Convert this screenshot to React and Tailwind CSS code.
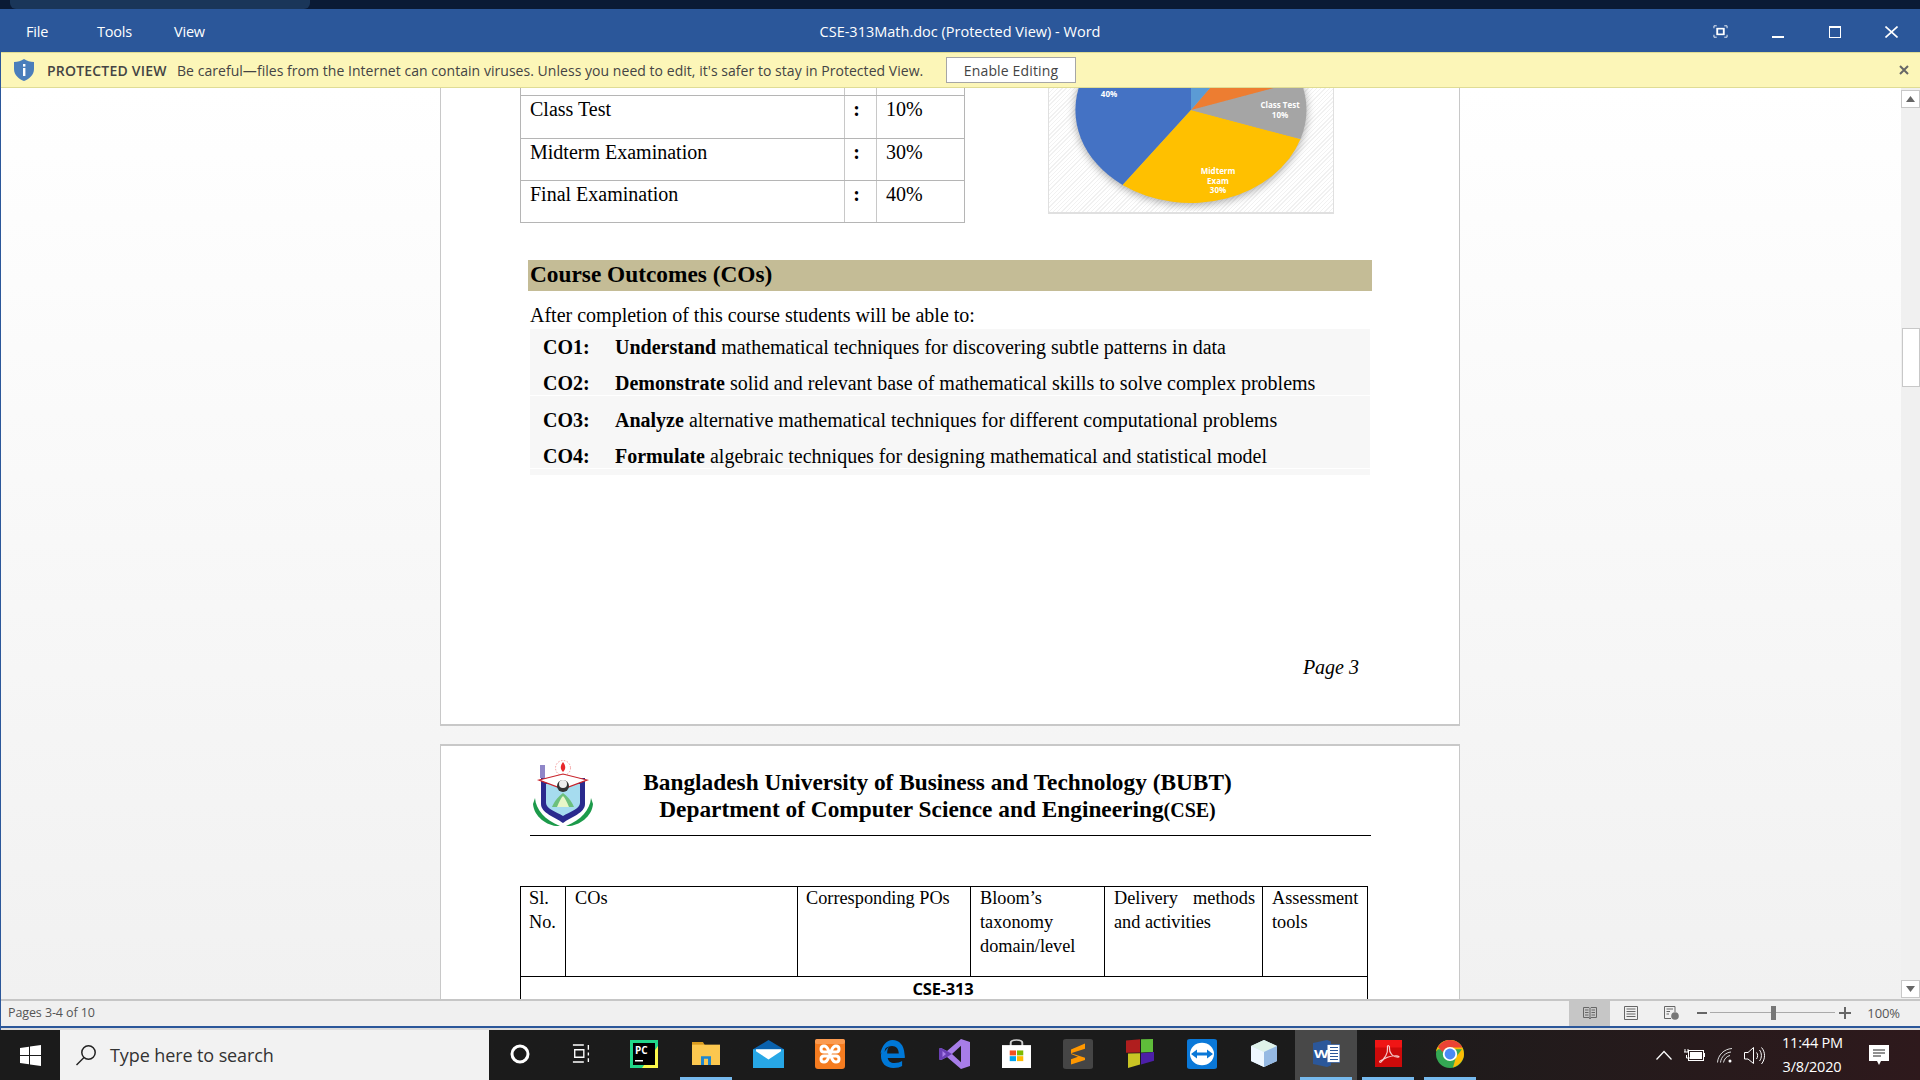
import React from "react";

const Cell = ({ children, active, under }) => (
  <div className={`w-[62px] h-[50px] flex flex-col items-center ${active ? "bg-[#484848]" : ""}`}>
    <div className="flex-1 flex items-center justify-center">{children}</div>
    <div className={`h-[3px] w-[52px] ${under ? "bg-[#76b9ed]" : ""}`} />
  </div>
);

const Ic = ({ children, w = 34, h = 34, vb = "0 0 34 34" }) => (
  <svg width={w} height={h} viewBox={vb} preserveAspectRatio="none">{children}</svg>
);

const Row = ({ code, verb, rest, cls }) => (
  <div className={`h-[36px] flex items-center pl-[13px] pb-[2px] ${cls || ""}`}>
    <b className="w-[72px] shrink-0">{code}</b>
    <span><b>{verb}</b> {rest}</span>
  </div>
);

const Logo = () => (
  <svg width="60" height="68" viewBox="0 0 60 68" className="shrink-0">
    <rect x="7" y="5" width="5" height="13" fill="#8f86c8" />
    <circle cx="30" cy="8" r="7.500" fill="none" stroke="#f39a9a" strokeDasharray="1.500 1.500" />
    <path d="M30 2c3 4 3 7 0 10c-3-3-3-6 0-10z" fill="#e8262a" />
    <path d="M2 38C3 50 12 60 27 66C15 67 1 57 0 44Z" fill="#1c9a4a" />
    <path d="M58 38C57 50 48 60 33 66C45 67 59 57 60 44Z" fill="#1c9a4a" />
    <path d="M8 18L52 18L52 44C52 53 38 57 30 63C22 57 8 53 8 44Z" fill="#2a2a8e" />
    <path d="M13 24L47 24L47 43C47 49 36 52 30 56C24 52 13 49 13 43Z" fill="#a6dcef" />
    <path d="M6 20L30 14L54 20L30 29Z" fill="#fff" stroke="#c8242b" strokeWidth="1.200" />
    <circle cx="30" cy="26" r="6" fill="#333" />
    <circle cx="30" cy="24" r="4" fill="#eee" />
    <path d="M19 47C22 40 26 36 30 33C34 36 38 40 41 47Z" fill="#6cc07c" />
    <path d="M24 47C26 42 28 38 30 36C32 38 34 42 36 47Z" fill="#e8f6c8" />
  </svg>
);

const Pie = () => (
  <svg width="284" height="123" viewBox="0 0 284 123">
    <g className="drop-shadow-[0_2px_4px_rgba(0,0,0,0.35)]">
      <path d="M142 22L142 -71A115.500 93 0 0 0 73.600 97L142 22Z" fill="#4472c4" />
      <path d="M142 22L73.600 97A115.500 93 0 0 0 251.500 51Z" fill="#ffc000" />
      <path d="M142 22L251.500 51A115.500 93 0 0 0 251.600 -7.200Z" fill="#a5a5a5" />
      <path d="M142 22L251.600 -7.200A115.500 93 0 0 0 207.900 -54.400Z" fill="#ed7d31" />
      <path d="M142 22L207.900 -54.400A115.500 93 0 0 0 142 -71Z" fill="#5b9bd5" />
    </g>
    <g fill="#fff" fontSize="8" fontWeight="700" textAnchor="middle" fontFamily="'Open Sans',sans-serif">
      <text x="60" y="9">40%</text>
      <text x="231" y="20">Class Test</text>
      <text x="231" y="30">10%</text>
      <text x="169" y="86">Midterm</text>
      <text x="169" y="96">Exam</text>
      <text x="169" y="105">30%</text>
    </g>
  </svg>
);

const MarkRow = ({ label, pct, h }) => (
  <div className={`flex border-b border-[#b5b5b5] ${h}`}>
    <div className="w-[324px] pl-[9px] pt-[1px] border-r border-[#c8c8c8]">{label}</div>
    <div className="w-[32px] pr-[8px] text-center pt-[1px] font-bold border-r border-[#c8c8c8]">:</div>
    <div className="pl-[9px] pt-[1px]">{pct}</div>
  </div>
);

export default function App() {
  return (
    <div className="w-[1920px] h-[1080px] overflow-hidden flex flex-col bg-[#0a1a35] font-['Open_Sans',sans-serif]">
      {/* dark strip */}
      <div className="h-[9px] shrink-0 pl-[10px]">
        <div className="w-[300px] h-[9px] bg-[#1a3659] rounded-b-[6px]" />
      </div>

      {/* title bar */}
      <div className="h-[43px] shrink-0 bg-[#2b579a] grid grid-cols-[1fr_auto_1fr] items-center text-white text-[14.5px] pt-[2px]">
        <div className="flex pl-[26px] tracking-[-0.2px]">
          <span className="w-[71px]">File</span>
          <span className="w-[77px]">Tools</span>
          <span>View</span>
        </div>
        <div>CSE-313Math.doc (Protected View) - Word</div>
        <div className="flex justify-end items-center">
          <div className="w-[57px] flex justify-center">
            <svg width="15" height="13" viewBox="0 0 16 16" preserveAspectRatio="none" fill="none" stroke="#fff">
              <rect x="4.500" y="4.500" width="7" height="7" strokeWidth="2" />
              <path d="M1 4V1H4M12 1H15V4M15 12V15H12M4 15H1V12" />
            </svg>
          </div>
          <div className="w-[57px] flex justify-center">
            <svg width="12" height="12" viewBox="0 0 12 12" stroke="#fff" strokeWidth="2"><path d="M0 11H12" /></svg>
          </div>
          <div className="w-[57px] flex justify-center">
            <svg width="12" height="12" viewBox="0 0 12 12" fill="none" stroke="#fff"><rect x=".5" y=".5" width="11" height="11" /><path d="M0 1H12" strokeWidth="2" /></svg>
          </div>
          <div className="w-[57px] flex justify-center">
            <svg width="13" height="12" viewBox="0 0 13 12" stroke="#fff" strokeWidth="1.600"><path d="M.5 .5L12.500 11.500M12.500 .5L.5 11.500" /></svg>
          </div>
        </div>
      </div>

      {/* window */}
      <div className="flex-1 min-h-0 flex flex-col border-l border-[#2b579a]">
        {/* protected bar */}
        <div className="h-[36px] shrink-0 bg-[#fcf6b8] border-y border-[#dfdc95] flex items-center text-[14px] text-[#444]">
          <svg width="20" height="22" viewBox="0 0 20 22" className="ml-[13px] shrink-0">
            <path d="M10 0C13 2 16 3 20 3L20 10C20 16 15 20 10 22C5 20 0 16 0 10L0 3C4 3 7 2 10 0Z" fill="#4a7ebb" />
            <rect x="9" y="5" width="2.400" height="2.600" fill="#fff" />
            <rect x="9" y="9" width="2.400" height="8" fill="#fff" />
          </svg>
          <span className="ml-[13px] w-[130px] shrink-0 font-semibold tracking-[0.2px] whitespace-nowrap">PROTECTED VIEW</span>
          <span className="w-[769px] shrink-0 tracking-[0.04px] whitespace-nowrap">Be careful—files from the Internet can contain viruses. Unless you need to edit, it's safer to stay in Protected View.</span>
          <button className="h-[26px] w-[130px] shrink-0 bg-white border border-[#a6a6a6] text-[14px] tracking-[0.15px] text-[#444]">Enable Editing</button>
          <div className="flex-1 flex justify-end pr-[11px]">
            <svg width="10" height="10" viewBox="0 0 10 10" stroke="#666" strokeWidth="2"><path d="M1 1L9 9M9 1L1 9" /></svg>
          </div>
        </div>

        {/* document */}
        <div className="flex-1 min-h-0 flex bg-gradient-to-b from-white to-[#f1f1f1]">
          <div className="flex-1 min-w-0 pr-[2px] overflow-hidden flex flex-col items-center font-['Liberation_Serif',serif] text-black text-[20px] leading-[24px]">
            {/* page 1 */}
            <div className="w-[1020px] h-[638px] shrink-0 bg-white border-x border-b-2 border-[#c8c8c8] flex flex-col">
              <div className="flex pl-[79px] h-[135px] shrink-0 items-start">
                <div className="w-[445px] border-x border-[#b5b5b5]">
                  <div className="flex h-[8px] border-b border-[#b5b5b5]">
                    <div className="w-[324px] border-r border-[#c8c8c8]" />
                    <div className="w-[32px] border-r border-[#c8c8c8]" />
                  </div>
                  <MarkRow label="Class Test" pct="10%" h="h-[43px]" />
                  <MarkRow label="Midterm Examination" pct="30%" h="h-[42px]" />
                  <MarkRow label="Final Examination" pct="40%" h="h-[42px]" />
                </div>
                <div className="ml-[83px] w-[286px] h-[126px] border-x border-b-2 border-[#e0e0e0] bg-[repeating-linear-gradient(135deg,#f1f1f1_0,#f1f1f1_1px,#fff_1px,#fff_3px)]">
                  <Pie />
                </div>
              </div>

              <div className="mt-[37px] ml-[87px] w-[844px] h-[31px] shrink-0 bg-[#c4bc96] pl-[2px] pb-[3px] flex items-center font-bold text-[23.33px]">
                Course Outcomes (COs)
              </div>
              <div className="ml-[89px] h-[38px] shrink-0 pt-[12px]">After completion of this course students will be able to:</div>

              <div className="ml-[89px] w-[840px] shrink-0">
                <div className="h-[66px] bg-[#f7f7f7] pt-[1px]">
                  <Row code="CO1:" verb="Understand" rest="mathematical techniques for discovering subtle patterns in data" />
                  <Row code="CO2:" verb="Demonstrate" rest="solid and relevant base of mathematical skills to solve complex problems" />
                </div>
                <div className="mt-[1px] h-[72px] bg-[#f7f7f7] pt-[7px]">
                  <Row code="CO3:" verb="Analyze" rest="alternative mathematical techniques for different computational problems" />
                  <Row code="CO4:" verb="Formulate" rest="algebraic techniques for designing mathematical and statistical model" />
                </div>
                <div className="mt-[1px] h-[6px] bg-[#f7f7f7]" />
              </div>

              <div className="mt-[180px] pr-[100px] text-right italic">Page 3</div>
            </div>

            {/* page 2 */}
            <div className="mt-[18px] w-[1020px] h-[600px] shrink-0 bg-white border-x border-t-2 border-[#c8c8c8]">
              <div className="ml-[89px] w-[841px] h-[90px] border-b border-black flex items-start">
                <div className="ml-[3px] mt-[14px]"><Logo /></div>
                <div className="w-[697px] ml-[-4px] pt-[23px] text-center font-bold text-[23.33px] leading-[27px] whitespace-nowrap">
                  <div>Bangladesh University of Business and Technology (BUBT)</div>
                  <div>Department of Computer Science and Engineering<span className="text-[20px]">(CSE)</span></div>
                </div>
              </div>

              <div className="mt-[50px] ml-[79px] w-[848px] border border-b-0 border-black text-[18.3px] leading-[24px]">
                <div className="flex h-[90px] border-b border-black">
                  <div className="w-[45px] pl-[8px] mt-[-1px] border-r border-black">Sl. No.</div>
                  <div className="w-[232px] pl-[9px] mt-[-1px] border-r border-black">COs</div>
                  <div className="w-[173px] pl-[8px] mt-[-1px] border-r border-black">Corresponding POs</div>
                  <div className="w-[134px] pl-[9px] mt-[-1px] border-r border-black">Bloom’s taxonomy domain/level</div>
                  <div className="w-[158px] pl-[9px] pr-[7px] mt-[-1px] border-r border-black text-justify">Delivery methods and activities</div>
                  <div className="flex-1 pl-[9px] mt-[-1px]">Assessment tools</div>
                </div>
                <div className="text-center pr-[2px] font-['Open_Sans',sans-serif] font-bold text-[16.5px] tracking-[-0.2px]">CSE-313</div>
              </div>
            </div>
          </div>

          {/* scrollbar */}
          <div className="w-[19px] shrink-0 bg-[#f0f0f0] flex flex-col pt-[2px] pb-[1px]">
            <div className="h-[18px] bg-white border border-[#c8c8c8] flex items-center justify-center">
              <svg width="9" height="6" viewBox="0 0 9 6"><path d="M4.500 0L9 6H0Z" fill="#666" /></svg>
            </div>
            <div className="mt-[220px] ml-[1px] h-[59px] bg-white border border-[#c8c8c8]" />
            <div className="flex-1" />
            <div className="h-[18px] bg-white border border-[#c8c8c8] flex items-center justify-center">
              <svg width="9" height="6" viewBox="0 0 9 6"><path d="M4.500 6L9 0H0Z" fill="#666" /></svg>
            </div>
          </div>
        </div>

        {/* status bar */}
        <div className="h-[27px] shrink-0 bg-[#f0f0f0] border-t-2 border-[#c6c6c6] flex items-center text-[12.5px] tracking-[-0.1px] text-[#555]">
          <span className="pl-[7px]">Pages 3-4 of 10</span>
          <div className="flex-1" />
          <div className="w-[41px] h-[25px] bg-[#c6c6c6] flex items-center justify-center">
            <svg width="14" height="14" viewBox="0 0 14 14" fill="none" stroke="#666" className="mb-[2px]"><path d="M.5 1.500H6L7 2.500L8 1.500H13.500V11.500H8L7 13L6 11.500H.5ZM7 2.500V12M2 4H5.500M2 6.500H5.500M2 9H5.500M8.500 4H12M8.500 6.500H12M8.500 9H12" /></svg>
          </div>
          <div className="w-[41px] flex justify-center">
            <svg width="14" height="14" viewBox="0 0 14 14" fill="none" stroke="#666" className="mb-[2px]"><path d="M.5.5H13.500V13.500H.5ZM2.500 3H11.500M2.500 5.500H11.500M2.500 8H11.500M2.500 10.500H11.500" /></svg>
          </div>
          <div className="w-[41px] flex justify-center">
            <svg width="15" height="14" viewBox="0 0 15 14" fill="none" stroke="#666" className="mb-[2px]"><path d="M7 12.500H.5V.5H11V6M2.500 3H9M2.500 5.500H6M2.500 8H5" /><circle cx="11" cy="10" r="3.800" fill="#777" stroke="none" /></svg>
          </div>
          <div className="w-[10px] ml-[5px] mb-[2px] h-[2px] bg-[#666]" />
          <div className="ml-[3px] mb-[2px] w-[125px] flex items-center">
            <div className="w-[61px] h-px bg-[#aaa]" />
            <div className="w-[5px] h-[14px] bg-[#777]" />
            <div className="flex-1 h-px bg-[#aaa]" />
          </div>
          <svg width="12" height="12" viewBox="0 0 12 12" stroke="#666" strokeWidth="2" className="ml-[4px] mb-[2px]"><path d="M0 6H12M6 0V12" /></svg>
          <span className="ml-[16px] pr-[20px] text-[13px]">100%</span>
        </div>
        <div className="h-[2px] shrink-0 bg-[#2b579a]" />
        <div className="h-[2px] shrink-0 bg-[#dcdcdc]" />
      </div>

      {/* taskbar */}
      <div className="h-[50px] shrink-0 flex bg-gradient-to-r from-[#1b1b1b] from-70% to-[#2e191c]">
        <div className="w-[60px] flex items-center justify-center">
          <svg width="21" height="21" viewBox="0 0 21 21" fill="#fff"><path d="M0 3L9 1.700V10H0ZM10 1.500L21 0V10H10ZM0 11H9V19.300L0 18ZM10 11H21V21L10 19.500Z" /></svg>
        </div>
        <div className="w-[429px] bg-[#f2f2f2] flex items-center text-[#333] text-[18px] tracking-[-0.1px]">
          <svg width="22" height="22" viewBox="0 0 22 22" fill="none" stroke="#222" strokeWidth="1.500" className="ml-[15px]"><circle cx="13.500" cy="8.500" r="6.700" /><path d="M9 13.500L1.500 21" /></svg>
          <span className="ml-[13px]">Type here to search</span>
        </div>

        <Cell>
          <svg width="22" height="22" viewBox="0 0 22 22" fill="none" stroke="#fff" strokeWidth="3"><circle cx="11" cy="11" r="8" /></svg>
        </Cell>
        <Cell>
          <svg width="20" height="19" viewBox="0 0 22 20" preserveAspectRatio="none" fill="none" stroke="#fff" strokeWidth="1.500"><path d="M1 1H13M3 6H13V14H3ZM1 19H13M18 1V6M18 9V12M18 15V19" /></svg>
        </Cell>
        <Cell>
          <Ic w={28} h={28} vb="0 0 28 28">
            <rect width="28" height="28" fill="#21d789" />
            <path d="M28 6V28H12Z" fill="#fcf84a" />
            <rect x="3" y="3" width="22" height="22" fill="#000" />
            <text x="5" y="14" fontSize="10" fontWeight="700" fill="#fff" fontFamily="'Open Sans',sans-serif">PC</text>
            <rect x="5" y="20" width="8" height="1.500" fill="#fff" />
          </Ic>
        </Cell>
        <Cell under>
          <Ic w={28} h={23} vb="0 0 28 26">
            <path d="M0 0H11L13 4H0Z" fill="#d89a1e" />
            <rect y="3" width="28" height="23" fill="#fcc74f" />
            <path d="M9 16H19V26H16V19H12V26H9Z" fill="#1f87d0" />
          </Ic>
        </Cell>
        <Cell>
          <Ic w={31} h={28} vb="0 0 31 30">
            <path d="M0 10L15.500 0L31 10V30H0Z" fill="#0a62ad" />
            <rect y="10" width="31" height="20" fill="#27a7e6" />
            <path d="M3 10H28V12L15.500 21L3 12Z" fill="#fff" />
          </Ic>
        </Cell>
        <Cell>
          <Ic w={30} h={30} vb="0 0 30 30">
            <rect width="30" height="30" rx="3" fill="#f57c20" />
            <rect y="0" width="30" height="5" rx="2" fill="#fb9a4f" />
            <path d="M9 7C5 7 5 13 9 13H21C25 13 25 7 21 7C17 7 17 11 15 15C13 11 13 7 9 7ZM9 17C5 17 5 23 9 23C13 23 13 19 15 15C17 19 17 23 21 23C25 23 25 17 21 17H9Z" fill="none" stroke="#fff" strokeWidth="3" />
          </Ic>
        </Cell>
        <Cell>
          <Ic w={25} h={28} vb="0 0 26 28">
            <path d="M13 0C20 0 25 5 25.500 14C26 17 26 18 25.500 18H8C8.500 21 11 23 15 23C18.500 23 21 22 23 21V26C21 27 18 28 14 28C6 28 1 23 1 16C1 11 4 7.500 8 6C5 8.500 5 10 5 12C6 9 10 5.500 13 5.500C9 5.500 7.500 9 7.500 13.500H19.500C19.500 9 17 6 12.500 6C8 6 3 9 .5 14C1.500 6 7 0 13 0Z" fill="#0078d7" />
          </Ic>
        </Cell>
        <Cell>
          <Ic w={31} h={30} vb="0 0 31 40">
            <path d="M22 0L31 4V36L22 40L8 24L2 28L0 27V13L2 12L8 16Z" fill="#a77de8" />
            <path d="M22 9L22 31L13 20Z" fill="#1b1b1b" />
            <path d="M0 13L2 12L8 16L13 20L8 24L2 28L0 27ZM3.500 16V24L7 20Z" fill="#6a3fb5" fillRule="evenodd" />
          </Ic>
        </Cell>
        <Cell>
          <Ic w={29} h={29} vb="0 0 30 38">
            <path d="M9 10V5C9 0 21 0 21 5V10" fill="none" stroke="#cfcfcf" strokeWidth="2" />
            <path d="M0 8H30V38H0Z" fill="#fff" />
            <rect x="8" y="15" width="6.500" height="6.500" fill="#f25022" />
            <rect x="15.500" y="15" width="6.500" height="6.500" fill="#7fba00" />
            <rect x="8" y="22.500" width="6.500" height="6.500" fill="#00a4ef" />
            <rect x="15.500" y="22.500" width="6.500" height="6.500" fill="#ffb900" />
          </Ic>
        </Cell>
        <Cell>
          <Ic w={30} h={30} vb="0 0 30 40">
            <rect width="30" height="40" rx="3" fill="#454545" />
            <path d="M22 6V13L8 19V14ZM8 19L22 25V28L8 34V27L15 23.500L8 20Z" fill="#ff9800" />
          </Ic>
        </Cell>
        <Cell>
          <Ic w={28} h={29} vb="0 0 28 40">
            <path d="M0 2L14 .5V18.500L0 19Z" fill="#b01e1e" />
            <path d="M15 .5L27 0V18L15 18.500Z" fill="#5fbd3a" />
            <path d="M2 20L14 19.500V35L2 40Z" fill="#c9c424" />
            <path d="M15 19.500L28 18V30L15 35Z" fill="#4c1fa8" />
          </Ic>
        </Cell>
        <Cell>
          <Ic w={30} h={30} vb="0 0 30 40">
            <rect width="30" height="40" rx="3" fill="#0a78d8" />
            <ellipse cx="15" cy="20" rx="12" ry="15" fill="#fff" />
            <path d="M4 20L10 14V18H20V14L26 20L20 26V22H10V26Z" fill="#0a78d8" />
          </Ic>
        </Cell>
        <Cell>
          <Ic w={26} h={27} vb="0 0 27 36">
            <path d="M13.500 0L27 8V28L13.500 36L0 28V8Z" fill="#c7e0f4" />
            <path d="M13.500 0L27 8L13.500 16L0 8Z" fill="#dff2e9" />
            <path d="M13.500 16L27 8V28L13.500 36Z" fill="#95b9e3" />
            <path d="M0 8L13.500 16V36L0 28Z" fill="#eef7ff" />
          </Ic>
        </Cell>
        <Cell active under>
          <Ic w={27} h={27} vb="0 0 27 36">
            <path d="M14 0L18 2V34L14 36L0 32V4Z" fill="#2b579a" />
            <rect x="14" y="6" width="13" height="24" fill="#fff" stroke="#2b579a" />
            <path d="M17 10H25M17 14H25M17 18H25M17 22H25M17 26H25" stroke="#2b579a" strokeWidth="1.400" />
            <text x="1" y="24" fontSize="15" fontWeight="700" fill="#fff" fontFamily="'Open Sans',sans-serif">W</text>
          </Ic>
        </Cell>
        <Cell under>
          <Ic w={27} h={27} vb="0 0 27 36">
            <rect width="27" height="36" fill="#cd0a0a" />
            <rect width="27" height="10" fill="#f01515" />
            <path d="M5 28C10 26 13 17 12.500 10C12 6 15 7 14.500 11C14 17 18 23 23 23C25 23 24 21 21 21C15 21 9 24 7 28C5.500 31 4 30 5 28Z" fill="none" stroke="#f6cccc" strokeWidth="1.200" />
          </Ic>
        </Cell>
        <Cell under>
          <Ic w={28} h={28} vb="-14 -18 28 36">
            <ellipse rx="14" ry="18" fill="#34a853" />
            <path d="M0 -18C8 -18 14 -10 14 0C14 8 10 14 3 17.500L6 4L12 -6H-12L-14 -3C-13 -12 -7 -18 0 -18Z" fill="#fbbc05" />
            <path d="M0 -18C6 -18 10 -14 12.400 -8.500H0C-5 -8.500 -7 -5 -7 -2L-12 -9C-9 -15 -5 -18 0 -18Z" fill="#ea4335" />
            <ellipse rx="7.200" ry="9" fill="#fff" />
            <ellipse rx="5.400" ry="7" fill="#4a8af4" />
          </Ic>
        </Cell>

        {/* tray */}
        <div className="flex-1 flex items-center justify-end pr-[6px] text-white text-[14.5px] leading-[24px]">
          <svg width="16" height="10" viewBox="0 0 16 10" fill="none" stroke="#fff" strokeWidth="1.200"><path d="M.5 9.500L8 1.500L15.500 9.500" /></svg>
          <svg width="21" height="14" viewBox="0 0 21 14" fill="none" stroke="#fff" className="ml-[12px]"><path d="M1 1V4M4 1V4M0 4H5M2.500 7V10H6" /><rect x="4.500" y="2.500" width="15" height="10" /><rect x="6" y="4" width="12" height="7" fill="#fff" stroke="none" /><path d="M20.500 5V9" /></svg>
          <svg width="16" height="15" viewBox="0 0 16 15" fill="none" stroke="#ddd" className="ml-[12px]"><path d="M.5 14.500C1 7 7 1 15 .5M3.500 14.500C4 9 8.500 4.500 14 4M6.500 14.500C7 11 10 8 13 7.500" /><circle cx="13" cy="13" r="1.500" fill="#fff" stroke="none" /></svg>
          <svg width="21" height="19" viewBox="0 0 21 19" fill="none" stroke="#fff" className="ml-[11px]"><path d="M.5 6.500H4L9.500 1.500V17.500L4 13H.5ZM12.500 6.500C14 8 14 11 12.500 13M15.500 4C18 7 18 12 15.500 15M17.500 1.500C21.500 6 21.500 13 17.500 18" /></svg>
          <div className="ml-[17px] w-[60px] text-center tracking-[-0.2px]">
            <div className="whitespace-nowrap">11:44 PM</div>
            <div>3/8/2020</div>
          </div>
          <svg width="20" height="21" viewBox="0 0 20 21" className="ml-[27px] mr-[25px]"><path d="M0 0H20V16H12L10 20L8 16H0Z" fill="#fff" /><path d="M4 5H16M4 8H16M4 11H12" stroke="#222" /></svg>
        </div>
      </div>
    </div>
  );
}
